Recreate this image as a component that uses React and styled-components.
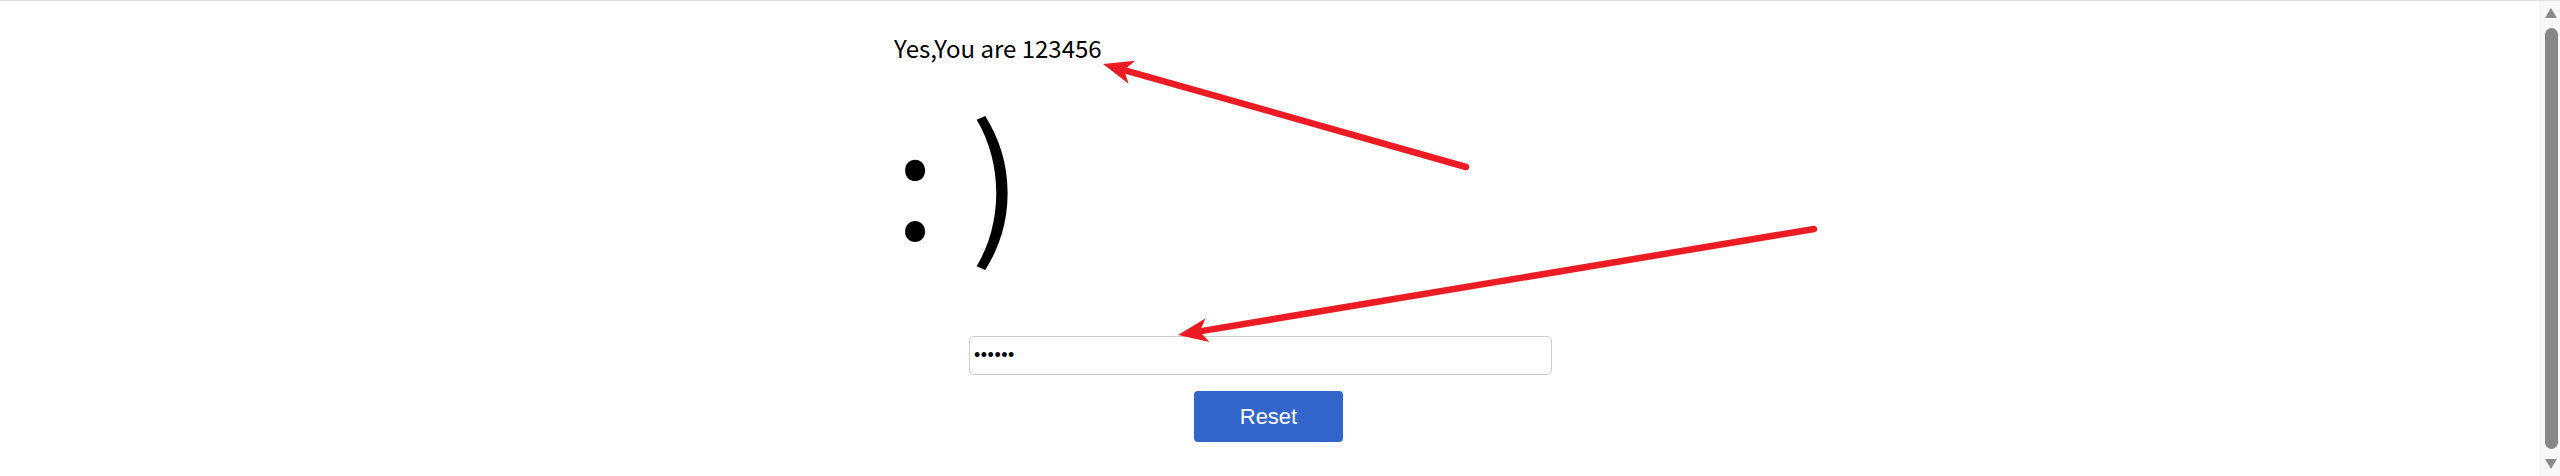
import React from "react";
import styled, { createGlobalStyle } from "styled-components";

const GlobalStyle = createGlobalStyle`
  html, body {
    margin: 0;
    padding: 0;
    background: #fff;
    overflow: hidden;
  }
`;

const Page = styled.div`
  position: relative;
  display: flex;
  width: 2560px;
  height: 476px;
  box-sizing: border-box;
  border-top: 1px solid #dddddd;
`;

const Main = styled.main`
  flex: 1;
  min-width: 0;
`;

const Panel = styled.section`
  width: 752px;
  margin: 0 auto;
  padding-top: 32px;
  display: flex;
  flex-direction: column;
  align-items: flex-start;
  font-family: "Noto Sans CJK SC", "Noto Sans", sans-serif;
  color: #000;
`;

const Message = styled.p`
  margin: 0;
  font-size: 24px;
  line-height: 30px;
`;

const Smiley = styled.h1`
  margin: 26px 0 0;
  font-size: 152px;
  font-weight: 400;
  line-height: 170px;
  white-space: pre;
`;

const PasswordInput = styled.input`
  margin: 77px 0 0 75px;
  width: 583px;
  height: 39px;
  box-sizing: border-box;
  padding: 0 4px;
  border: 1px solid #cccccc;
  border-radius: 5px;
  font-family: "Liberation Sans", Arial, sans-serif;
  font-size: 18px;
  letter-spacing: 0.5px;
  color: #000;
  outline: none;
`;

const ResetButton = styled.button`
  margin: 16px 0 0 300px;
  width: 149px;
  height: 51px;
  border: none;
  border-radius: 4px;
  background: #3366cc;
  color: #fff;
  font-family: "Liberation Sans", Arial, sans-serif;
  font-size: 22px;
  cursor: pointer;
`;

const Scrollbar = styled.div`
  width: 20px;
  flex: 0 0 20px;
  background: #f8f8f8;
  border-left: 1px solid #f0f0f0;
  box-sizing: border-box;
  display: flex;
  flex-direction: column;
  align-items: center;
  padding: 7px 0 7px 1px;
`;

const ScrollArrow = styled.span`
  width: 0;
  height: 0;
  border-left: 6px solid transparent;
  border-right: 6px solid transparent;
  ${({ $down }) =>
    $down
      ? "border-top: 10px solid #8a8a8a;"
      : "border-bottom: 10px solid #8a8a8a;"}
`;

const ScrollThumb = styled.div`
  flex: 1;
  width: 13px;
  margin: 10px 0;
  border-radius: 7px;
  background: #888888;
`;

const Annotations = styled.svg`
  position: absolute;
  top: -1px;
  left: 0;
  pointer-events: none;
`;

const RED = "#ed1c24";

// arrow from tail to tip, head drawn as a notched triangle
const Arrow = ({ x1, y1, x2, y2 }) => {
  const dx = x2 - x1;
  const dy = y2 - y1;
  const len = Math.hypot(dx, dy);
  const ux = dx / len;
  const uy = dy / len;
  const px = -uy;
  const py = ux;
  const headLen = 30;
  const headW = 12;
  const bx = x2 - ux * headLen;
  const by = y2 - uy * headLen;
  const nx = x2 - ux * (headLen - 8);
  const ny = y2 - uy * (headLen - 8);
  const pts = [
    [x2, y2],
    [bx + px * headW, by + py * headW],
    [nx, ny],
    [bx - px * headW, by - py * headW],
  ]
    .map((p) => p.join(","))
    .join(" ");
  return (
    <g>
      <line
        x1={x1}
        y1={y1}
        x2={nx}
        y2={ny}
        stroke={RED}
        strokeWidth="6.5"
        strokeLinecap="round"
      />
      <polygon points={pts} fill={RED} />
    </g>
  );
};

const App = () => {
  return (
    <>
      <GlobalStyle />
      <Page>
        <Main>
          <Panel>
            <Message>Yes,You are 123456</Message>
            <Smiley>: )</Smiley>
            <PasswordInput type="password" value="123456" readOnly />
            <ResetButton type="button">Reset</ResetButton>
          </Panel>
        </Main>
        <Scrollbar>
          <ScrollArrow />
          <ScrollThumb />
          <ScrollArrow $down />
        </Scrollbar>
        <Annotations width="2560" height="476" viewBox="0 0 2560 476">
          <Arrow x1={1466} y1={167} x2={1103} y2={64} />
          <Arrow x1={1814} y1={229} x2={1178} y2={335} />
        </Annotations>
      </Page>
    </>
  );
};

export default App;
